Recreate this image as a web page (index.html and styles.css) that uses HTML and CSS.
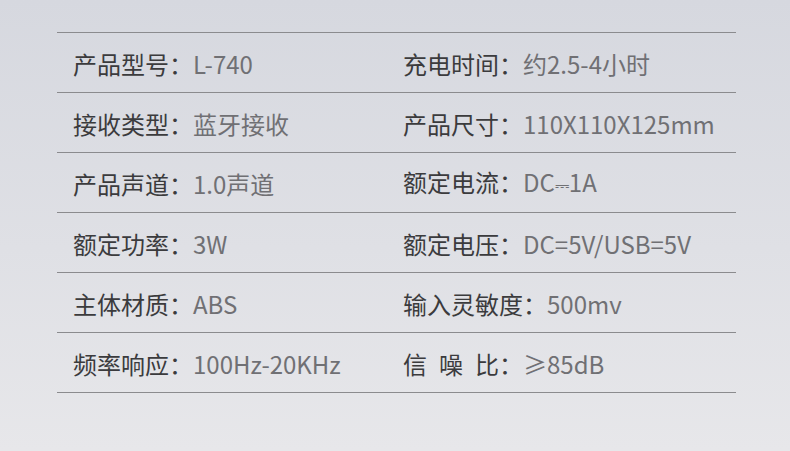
FILE: index.html
```html
<!DOCTYPE html>
<html lang="zh-CN">
<head>
<meta charset="utf-8">
<link rel="stylesheet" href="styles.css">
</head>
<body>
<div class="specs">
  <div class="row">
    <div class="cell"><span class="label">产品型号：</span><span class="value">L-740</span></div>
    <div class="cell"><span class="label">充电时间：</span><span class="value">约2.5-4小时</span></div>
  </div>
  <div class="row">
    <div class="cell"><span class="label">接收类型：</span><span class="value">蓝牙接收</span></div>
    <div class="cell"><span class="label">产品尺寸：</span><span class="value">110X110X125mm</span></div>
  </div>
  <div class="row">
    <div class="cell"><span class="label">产品声道：</span><span class="value">1.0声道</span></div>
    <div class="cell"><span class="label">额定电流：</span><span class="value">DC<span class="dc">⎓</span>1A</span></div>
  </div>
  <div class="row">
    <div class="cell"><span class="label">额定功率：</span><span class="value">3W</span></div>
    <div class="cell"><span class="label">额定电压：</span><span class="value">DC=5V/USB=5V</span></div>
  </div>
  <div class="row">
    <div class="cell"><span class="label">主体材质：</span><span class="value">ABS</span></div>
    <div class="cell"><span class="label">输入灵敏度：</span><span class="value">500mv</span></div>
  </div>
  <div class="row">
    <div class="cell"><span class="label">频率响应：</span><span class="value">100Hz-20KHz</span></div>
    <div class="cell"><span class="label">信&ensp;噪&ensp;比：</span><span class="value">≥85dB</span></div>
  </div>
</div>
</body>
</html>
```
FILE: styles.css
```css
html, body {
  margin: 0;
  padding: 0;
}
body {
  width: 790px;
  height: 451px;
  overflow: hidden;
  background: linear-gradient(180deg, #d6d8df 0%, #dfe0e5 55%, #e7e7ea 100%);
  font-family: "Noto Sans CJK SC", "Noto Sans", sans-serif;
}
.specs {
  margin: 32px 0 0 57px;
  width: 679px;
  border-top: 1px solid #8b8b8e;
}
.row {
  display: grid;
  grid-template-columns: 330px 1fr;
  padding-left: 16px;
  height: 59px;
  border-bottom: 1px solid #8b8b8e;
  align-items: center;
}
.cell {
  font-size: 24px;
  line-height: 30px;
  padding-top: 3px;
  white-space: nowrap;
}
.label {
  color: #3b3b3d;
}
.value {
  color: #707074;
}
.dc {
  font-size: 18px;
  font-family: "DejaVu Sans", sans-serif;
}
```
